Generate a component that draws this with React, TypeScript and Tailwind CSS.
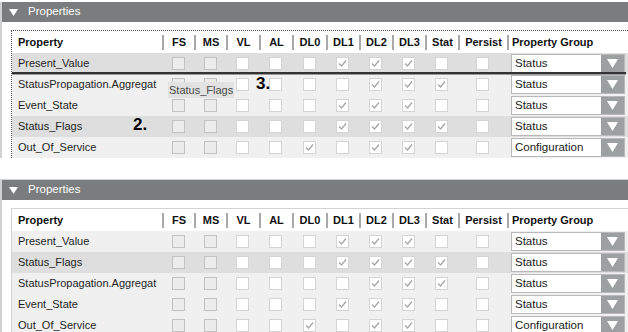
import React from "react";

const COLS: [string, string][] = [
  ["FS", "w-[32px]"],
  ["MS", "w-[32px]"],
  ["VL", "w-[33px]"],
  ["AL", "w-[33px]"],
  ["DL0", "w-[34px]"],
  ["DL1", "w-[33px]"],
  ["DL2", "w-[33px]"],
  ["DL3", "w-[33px]"],
  ["Stat", "w-[33px]"],
  ["Persist", "w-[49px]"],
];

type Row = { name: string; s: string; group: string; sel?: boolean };

const rows1: Row[] = [
  { name: "Present_Value", s: "dd00011100", group: "Status", sel: true },
  { name: "StatusPropagation.Aggregat", s: "dd00001110", group: "Status" },
  { name: "Event_State", s: "dd00011100", group: "Status" },
  { name: "Status_Flags", s: "dd00011110", group: "Status", sel: true },
  { name: "Out_Of_Service", s: "dd00101100", group: "Configuration" },
];

const rows2: Row[] = [
  { name: "Present_Value", s: "dd00011100", group: "Status" },
  { name: "Status_Flags", s: "dd00011110", group: "Status", sel: true },
  { name: "StatusPropagation.Aggregat", s: "dd00001110", group: "Status" },
  { name: "Event_State", s: "dd00011100", group: "Status" },
  { name: "Out_Of_Service", s: "dd00101100", group: "Configuration" },
];

function Box({ t }: { t: string }) {
  if (t === "d")
    return <div className="w-[13px] h-[13px] border border-[#c2c2c2] bg-[#ececec]" />;
  return (
    <div className="w-[13px] h-[13px] border border-[#d4d4d4] bg-white flex items-center justify-center">
      {t === "1" && (
        <svg width="11" height="11" viewBox="0 0 11 11">
          <path d="M2 5.5 L4.5 8 L9 2.5" fill="none" stroke="#a6a6a6" strokeWidth="1.3" />
        </svg>
      )}
    </div>
  );
}

function Select({ value }: { value: string }) {
  return (
    <div className="w-[114px] h-[19px] border border-[#b9b9b9] bg-white flex">
      <div className="flex-1 pl-[3px] leading-[17px] text-[11.5px] text-[#1a1a1a]">{value}</div>
      <div className="w-[23px] h-full bg-[#9da0a1] flex items-center justify-center">
        <svg width="11" height="9" viewBox="0 0 11 9">
          <path d="M0 0 H11 L5.5 9 Z" fill="#ffffff" />
        </svg>
      </div>
    </div>
  );
}

function Header() {
  return (
    <div className="flex h-[22px] items-center bg-white font-bold text-[11px] text-[#111]">
      <div className="w-[150px] pl-[6px]">Property</div>
      {COLS.map(([n, w]) => (
        <div key={n} className={`${w} flex items-center`}>
          <span className="w-[2px] h-[15px] bg-[#a9a9a9]" />
          <span className="flex-1 text-center">{n}</span>
        </div>
      ))}
      <div className="flex-1 flex items-center">
        <span className="w-[2px] h-[15px] bg-[#a9a9a9]" />
        <span className="pl-[3px]">Property Group</span>
      </div>
    </div>
  );
}

function DataRow({ r }: { r: Row }) {
  return (
    <div className={`flex h-[21px] items-center ${r.sel ? "bg-[#dedede]" : "bg-[#f0f0f0]"}`}>
      <div className="w-[150px] pl-[6px] whitespace-nowrap overflow-hidden text-[11px] text-[#1e1e1e]">
        {r.name}
      </div>
      {COLS.map(([n, w], i) => (
        <div key={n} className={`${w} flex justify-center`}>
          <Box t={r.s[i]} />
        </div>
      ))}
      <div className="flex-1 pl-[4px]">
        <Select value={r.group} />
      </div>
    </div>
  );
}

function PanelHeader() {
  return (
    <div className="h-[20px] bg-[#7a7c7d] flex items-center text-white text-[11.5px]">
      <svg width="9" height="7" viewBox="0 0 9 7" className="ml-[7px]">
        <path d="M0 0 H9 L4.5 7 Z" fill="#ffffff" />
      </svg>
      <span className="ml-[10px]">Properties</span>
    </div>
  );
}

export default function App() {
  return (
    <div className="relative w-[628px] h-[332px] bg-white overflow-hidden pt-[2px] font-['Liberation_Sans',Arial,sans-serif]">
      {/* Panel 1 */}
      <div className="border-l-2 border-[#d2d2d2]">
        <PanelHeader />
        <div className="pt-[8px] pl-[9px]">
          <div className="border-t border-l border-dotted border-[#555]">
            <Header />
            <div className="relative">
              {rows1.map((r) => (
                <DataRow key={r.name} r={r} />
              ))}
              <div className="absolute left-0 right-[2px] top-[19px] h-[2px] bg-[#333]" />
              <div className="absolute left-0 right-[2px] top-[21px] h-[1px] bg-[#9a9a9a]" />
            </div>
          </div>
        </div>
      </div>

      {/* Panel 2 */}
      <div className="mt-[21px] border-l-2 border-t border-[#d2d2d2]">
        <PanelHeader />
        <div className="pt-[8px] pl-[9px]">
          <div className="border-t border-l border-[#d4d4d4]">
            <Header />
            <div>
              {rows2.map((r) => (
                <DataRow key={r.name} r={r} />
              ))}
            </div>
          </div>
        </div>
      </div>

      {/* drag tooltip and annotations */}
      <div className="absolute left-[168px] top-[82px] h-[16px] bg-[#e2e2e2] text-[11px] text-[#4a4a4a] leading-[16px] px-[1px] whitespace-nowrap">
        Status_Flags
      </div>
      <div className="absolute left-[256px] top-[74px] text-[17px] font-bold text-black leading-[20px]">3.</div>
      <div className="absolute left-[133px] top-[115px] text-[17px] font-bold text-black leading-[20px]">2.</div>
    </div>
  );
}
